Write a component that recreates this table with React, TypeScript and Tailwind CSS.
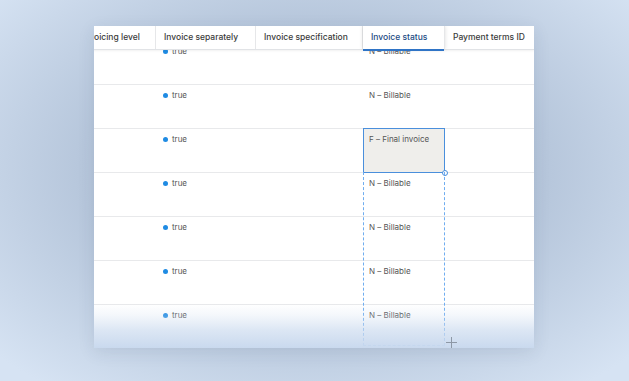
import React from "react";

const cols = [
  { key: "level", title: "Invoicing level", w: "w-[82px]" },
  { key: "sep", title: "Invoice separately", w: "w-[100px]" },
  { key: "spec", title: "Invoice specification", w: "w-[107px]" },
  { key: "status", title: "Invoice status", w: "w-[82px]" },
  { key: "terms", title: "Payment terms ID", w: "flex-1" },
];

const rows = [0, 1, 2, 3, 4, 5, 6, 7];

export default function App() {
  return (
    <div
      className="relative w-[629px] h-[381px] overflow-hidden bg-[radial-gradient(ellipse_68%_72%_at_50%_45%,#9eb0c6_0%,#b7c7dc_55%,#d6e3f3_100%)] pl-[94px] pt-[26px]"
      style={{ fontFamily: "Inter, 'Noto Sans', sans-serif" }}
    >
      <div className="relative w-[440px] h-[322px] bg-white overflow-hidden flex flex-col shadow-[0_4px_16px_rgba(40,60,90,0.10)]">
        {/* header */}
        <div className="relative z-20 flex h-[24px] shrink-0 bg-white border-b border-[#e1e3e6] shadow-[0_1px_2px_rgba(0,0,0,0.06)] -ml-[20px]">
          {cols.map((c) => (
            <div
              key={c.key}
              className={`${c.w} relative flex items-center pl-[8px] text-[8.5px] font-medium whitespace-nowrap border-r border-[#e6e7e9] ${
                c.key === "status"
                  ? "text-[#1d4b84] shadow-[0_0_4px_rgba(0,0,0,0.14)] z-10 bg-white"
                  : "text-[#3b3b3b]"
              } ${c.key === "terms" ? "border-r-0" : ""}`}
            >
              {c.title}
              {c.key === "status" && (
                <div className="absolute left-0 right-0 -bottom-[2px] h-[2px] bg-[#2f74c6]" />
              )}
            </div>
          ))}
        </div>
        {/* body */}
        <div className="relative flex-1 overflow-hidden">
          <div className="-mt-[9px] -ml-[20px]">
            {rows.map((r) => (
              <div key={r} className="flex h-[44px] border-b border-[#e8e9eb]">
                <div className="w-[82px]" />
                <div className="w-[100px] flex items-start pt-[4px] pl-[7px] gap-[4px] text-[8px] leading-[12px] text-[#555]">
                  <span className="mt-[3.5px] w-[5px] h-[5px] rounded-full bg-[#1f8be3]" />
                  <span>true</span>
                </div>
                <div className="w-[107px]" />
                <div
                  className={`w-[82px] relative pt-[4px] pl-[6px] text-[8px] leading-[12px] text-[#555] whitespace-nowrap ${
                    r === 2 ? "bg-[#efeeeb]" : ""
                  }`}
                >
                  {r === 2 ? "F – Final invoice" : "N – Billable"}
                  {r === 2 && (
                    <>
                      <div className="absolute -top-[1px] -bottom-[1px] left-0 right-0 border-[1.5px] border-[#4a8fdc]" />
                      <div className="absolute -right-[3px] -bottom-[4px] w-[6px] h-[6px] rounded-full bg-white border border-[#4a8fdc] z-10" />
                    </>
                  )}
                  {r === 3 && (
                    <div className="absolute -top-[1px] left-0 right-0 h-[174px] border-l border-r border-b border-dashed border-[#6fadf0] z-10" />
                  )}
                </div>
                <div className="flex-1" />
              </div>
            ))}
          </div>
          {/* bottom fade */}
          <div className="absolute left-0 right-0 bottom-0 h-[44px] bg-[linear-gradient(to_bottom,rgba(201,217,238,0)_0%,rgba(201,217,238,0.2)_25%,rgba(201,217,238,0.65)_60%,#c9d9ee_100%)] z-20" />
          {/* crosshair cursor */}
          <div className="absolute z-30 left-[352px] top-[287px] w-[11px] h-[11px]">
            <div className="absolute left-[5px] top-0 w-[1px] h-[11px] bg-[#8d98a6]" />
            <div className="absolute top-[5px] left-0 h-[1px] w-[11px] bg-[#8d98a6]" />
          </div>
        </div>
      </div>
    </div>
  );
}
